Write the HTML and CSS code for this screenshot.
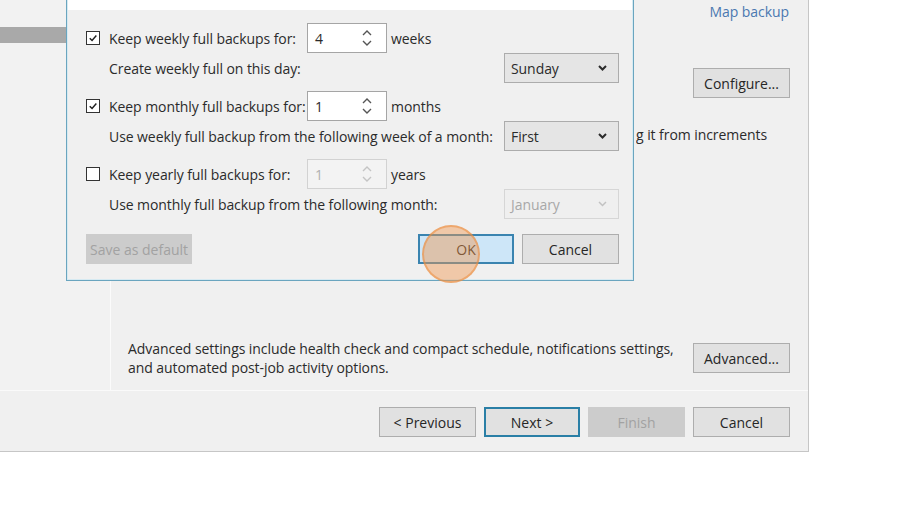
FILE: index.html
```html
<!DOCTYPE html>
<html lang="en">
<head>
<meta charset="utf-8">
<title>Backup Job Wizard - Storage</title>
<link rel="stylesheet" href="styles.css">
</head>
<body>
<div class="window">
  <div class="main">
    <nav class="nav">
      <div class="nav-item selected"></div>
    </nav>
    <section class="pane">
      <div class="pane-top"><a class="link" href="#">Map backup</a></div>
      <div class="configure-row"><button class="btn">Configure...</button></div>
      <div class="synthetic"><span class="synthetic-text">Create synthetic full backups periodically, building it from increments</span></div>
      <div class="advanced-row">
        <p class="advanced-text">Advanced settings include health check and compact schedule, notifications settings,<br>and automated post-job activity options.</p>
        <button class="btn">Advanced...</button>
      </div>
    </section>
  </div>
  <footer class="footer">
    <button class="btn">&lt; Previous</button>
    <button class="btn btn-default">Next &gt;</button>
    <button class="btn btn-disabled">Finish</button>
    <button class="btn">Cancel</button>
  </footer>

  <div class="dialog">
    <div class="dialog-head"></div>
    <div class="dialog-body">
      <div class="group">
        <div class="row-a">
          <span class="check checked"><svg viewBox="0 0 14 14"><path d="M3.2 7.2 L5.9 9.9 L10.9 4.2"/></svg></span>
          <span class="label">Keep weekly full backups for:</span>
          <span class="spin"><span class="spin-value">4</span><svg class="spin-arrows" viewBox="0 0 10 18"><path d="M1 6 L5 2 L9 6"/><path d="M1 12 L5 16 L9 12"/></svg></span>
          <span class="unit">weeks</span>
        </div>
        <div class="row-b">
          <span class="label-b">Create weekly full on this day:</span>
          <span class="combo"><span class="combo-value">Sunday</span><svg class="chev" viewBox="0 0 9 6"><path d="M1 1 L4.5 4.5 L8 1"/></svg></span>
        </div>
      </div>
      <div class="group">
        <div class="row-a">
          <span class="check checked"><svg viewBox="0 0 14 14"><path d="M3.2 7.2 L5.9 9.9 L10.9 4.2"/></svg></span>
          <span class="label">Keep monthly full backups for:</span>
          <span class="spin"><span class="spin-value">1</span><svg class="spin-arrows" viewBox="0 0 10 18"><path d="M1 6 L5 2 L9 6"/><path d="M1 12 L5 16 L9 12"/></svg></span>
          <span class="unit">months</span>
        </div>
        <div class="row-b">
          <span class="label-b">Use weekly full backup from the following week of a month:</span>
          <span class="combo"><span class="combo-value">First</span><svg class="chev" viewBox="0 0 9 6"><path d="M1 1 L4.5 4.5 L8 1"/></svg></span>
        </div>
      </div>
      <div class="group">
        <div class="row-a">
          <span class="check"></span>
          <span class="label">Keep yearly full backups for:</span>
          <span class="spin disabled"><span class="spin-value">1</span><svg class="spin-arrows" viewBox="0 0 10 18"><path d="M1 6 L5 2 L9 6"/><path d="M1 12 L5 16 L9 12"/></svg></span>
          <span class="unit">years</span>
        </div>
        <div class="row-b">
          <span class="label-b">Use monthly full backup from the following month:</span>
          <span class="combo disabled"><span class="combo-value">January</span><svg class="chev" viewBox="0 0 9 6"><path d="M1 1 L4.5 4.5 L8 1"/></svg></span>
        </div>
      </div>
      <div class="dialog-buttons">
        <button class="btn btn-disabled btn-wide">Save as default</button>
        <span class="spacer"></span>
        <button class="btn btn-ok">OK</button>
        <button class="btn">Cancel</button>
      </div>
    </div>
  </div>

  <div class="click-marker"></div>
</div>
</body>
</html>
```

FILE: styles.css
```css
*, *::before, *::after { box-sizing: border-box; }

body {
  margin: 0;
  background: #ffffff;
  font-family: "Open Sans", "Noto Sans", sans-serif;
  font-size: 14px;
  letter-spacing: -0.07px;
  color: #2b2b2b;
}

p { margin: 0; }

.window {
  position: relative;
  width: 809px;
  height: 452px;
  background: #f0f0f0;
  border-right: 1px solid #c6c6c6;
  border-bottom: 1px solid #c6c6c6;
  display: flex;
  flex-direction: column;
  overflow: hidden;
}

.main {
  display: flex;
  height: 390px;
  flex-shrink: 0;
}

/* left step list */
.nav {
  width: 111px;
  flex-shrink: 0;
  background: #f2f2f2;
  border-right: 1px solid #fbfbfb;
  padding-top: 27px;
}
.nav-item { height: 16px; }
.nav-item.selected { background: #a9a9a9; }

/* right settings pane */
.pane {
  flex: 1;
  min-width: 0;
  display: flex;
  flex-direction: column;
  padding: 0 18px 13px 17px;
}
.pane-top {
  height: 22px;
  display: flex;
  justify-content: flex-end;
  align-items: center;
  padding-right: 1px;
}
.link {
  color: #4a78b0;
  text-decoration: none;
}
.configure-row {
  display: flex;
  justify-content: flex-end;
  margin-top: 46px;
}
/* sentence runs under the dialog; only its tail shows */
.synthetic {
  margin-top: 27px;
  margin-left: 508px;
  min-width: 0;
  height: 20px;
  line-height: 20px;
  display: flex;
  justify-content: flex-end;
  padding-right: 23px;
  overflow: hidden;
  white-space: nowrap;
}
.synthetic-text { flex-shrink: 0; }
.advanced-row {
  margin-top: auto;
  display: flex;
  align-items: center;
  justify-content: space-between;
}
.advanced-text {
  line-height: 19px;
  white-space: nowrap;
}

/* buttons */
.btn {
  width: 97px;
  height: 30px;
  padding: 0;
  border: 1px solid #adadad;
  background: #e1e1e1;
  font: inherit;
  color: #262626;
}
.btn-default {
  border: 2px solid #2a7fa6;
  width: 96px;
}
.btn-disabled {
  background: #cccccc;
  border-color: #cccccc;
  color: #a2a2a2;
}
.btn-wide { width: 106px; }
.btn-ok {
  width: 96px;
  border: 2px solid #3a84b0;
  background: #cde6f8;
}

.footer {
  height: 61px;
  flex-shrink: 0;
  border-top: 1px solid #fafafa;
  display: flex;
  justify-content: flex-end;
  align-items: flex-start;
  gap: 8px;
  padding: 16px 18px 0 0;
}

/* retention settings dialog */
.dialog {
  position: absolute;
  left: 66px;
  top: -40px;
  width: 568px;
  height: 321px;
  border: 1px solid #6aa5bf;
  box-shadow: inset 0 0 0 1px #d6eaf2;
  background: #f0f0f0;
  display: flex;
  flex-direction: column;
}
.dialog-head {
  height: 48px;
  background: #ffffff;
  margin: 1px 1px 0 1px;
}
.dialog-body {
  flex: 1;
  display: flex;
  flex-direction: column;
  gap: 8px;
  padding: 13px 14px 0 19px;
}
.group { display: flex; flex-direction: column; }
.row-a, .row-b {
  height: 30px;
  display: flex;
  align-items: center;
  white-space: nowrap;
}
.check {
  width: 14px;
  height: 14px;
  border: 1px solid #333333;
  background: #ffffff;
  margin: 0 9px 0 0;
  display: flex;
}
.check svg { width: 12px; height: 12px; }
.check path {
  fill: none;
  stroke: #1e1e1e;
  stroke-width: 1.7;
}
.label { width: 198px; }
.spin {
  width: 80px;
  height: 30px;
  border: 1px solid #a5a5a5;
  background: #ffffff;
  display: flex;
  align-items: center;
  padding: 0 14px 0 7px;
}
.spin-value { flex: 1; }
.spin-arrows {
  width: 10px;
  height: 18px;
}
.spin-arrows path {
  fill: none;
  stroke: #555555;
  stroke-width: 1.4;
}
.spin.disabled {
  border-color: #d2d2d2;
  background: #f3f3f3;
  color: #b0b0b0;
}
.spin.disabled path { stroke: #c4c4c4; }
.unit { margin-left: 4px; }

.row-b { padding-left: 23px; }
.label-b { flex: 1; }
.combo {
  width: 115px;
  height: 30px;
  border: 1px solid #acacac;
  background: #e5e5e5;
  display: flex;
  align-items: center;
  padding: 0 11px 0 6px;
}
.combo-value { flex: 1; }
.chev { width: 9px; height: 6px; }
.chev path {
  fill: none;
  stroke: #2b2b2b;
  stroke-width: 2;
}
.combo.disabled {
  border-color: #d6d6d6;
  background: #efefef;
  color: #a8a8a8;
}
.combo.disabled path { stroke: #c2c2c2; stroke-width: 1.5; }

.dialog-buttons {
  margin-top: 7px;
  display: flex;
  gap: 8px;
}
.spacer { flex: 1; }

/* click highlight over the OK button */
.click-marker {
  position: absolute;
  left: 422px;
  top: 225px;
  width: 58px;
  height: 58px;
  border-radius: 50%;
  background: rgba(240, 150, 80, 0.45);
  border: 2px solid rgba(236, 140, 60, 0.55);
}
```
